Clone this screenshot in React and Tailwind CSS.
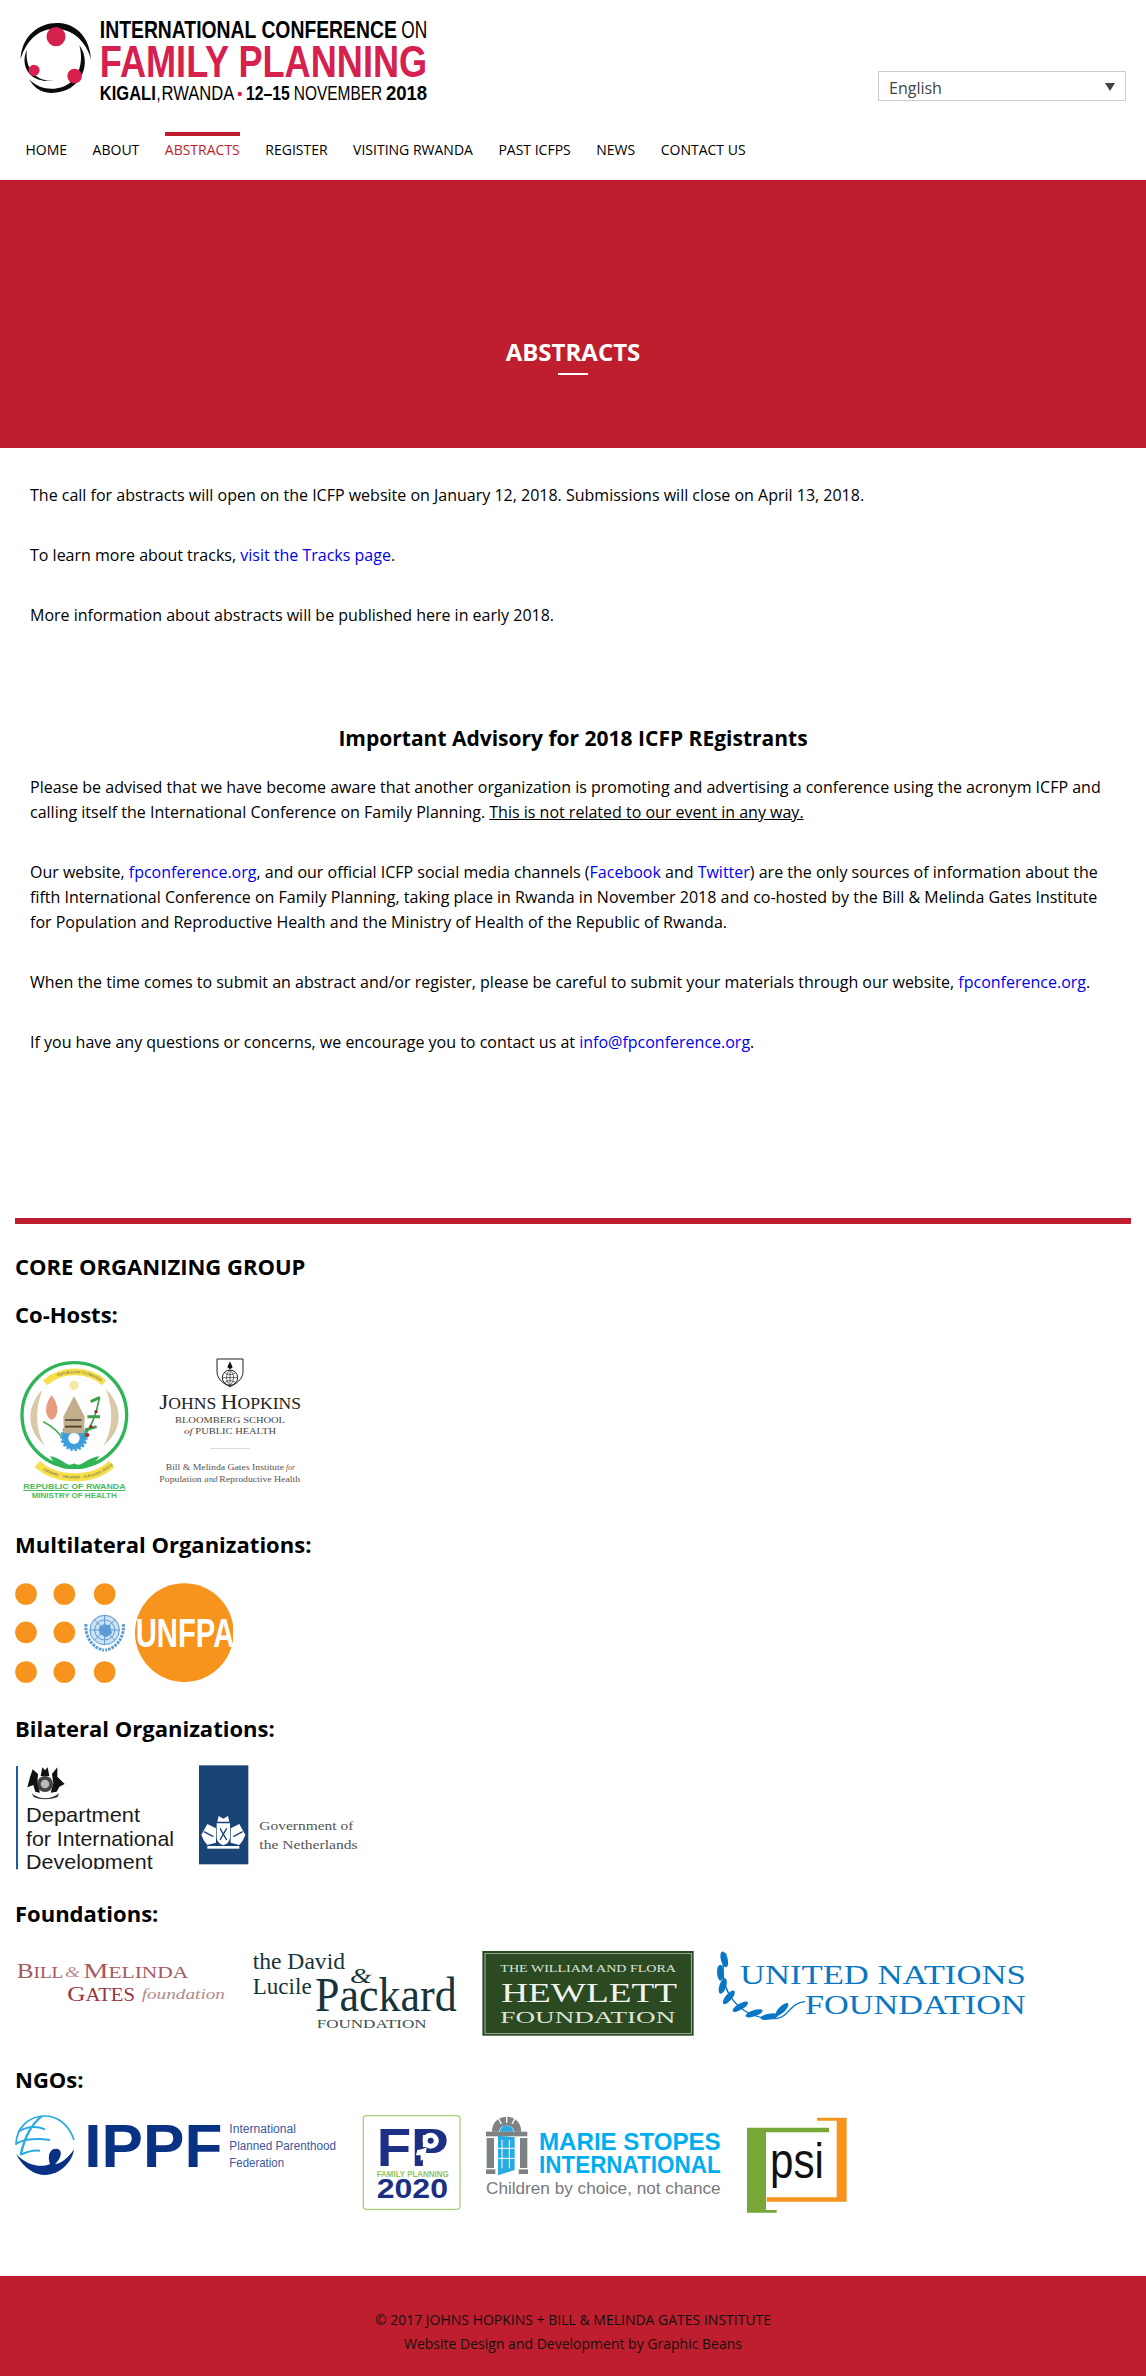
import React from "react";

const SANS = "'Liberation Sans', Arial, sans-serif";
const SERIF = "'Liberation Serif', 'Times New Roman', serif";

// svg text squeezed to the exact span read from the reference
function T({ x, x2, y, size, fill = "#000", bold, italic, font = SANS, children }) {
  return (
    <text
      x={x}
      y={y}
      fontSize={size}
      fill={fill}
      fontFamily={font}
      fontWeight={bold ? 700 : 400}
      fontStyle={italic ? "italic" : "normal"}
      textLength={x2 - x}
      lengthAdjust="spacingAndGlyphs"
    >
      {children}
    </text>
  );
}

function HeaderLogo() {
  return (
    <svg viewBox="48 60 1125 255" preserveAspectRatio="none" className="w-[411px] h-[85px] block">
      <path d="M55 178C58 105 108 66 160 69C208 72 244 112 248 178C236 128 200 86 150 86C104 86 70 122 55 178Z" fill="#0b0b0b" />
      <path d="M216 136C252 188 222 280 138 279C108 278 92 262 78 238C102 262 122 268 148 266C205 262 232 200 216 136Z" fill="#0b0b0b" />
      <path d="M72 150C52 200 82 252 146 242C112 246 66 222 72 150Z" fill="#0b0b0b" />
      <ellipse cx="152" cy="110" rx="26" ry="29" fill="#d6204e" />
      <ellipse cx="203" cy="228" rx="20" ry="22" fill="#d6204e" />
      <ellipse cx="92" cy="211" rx="15" ry="17" fill="#d6204e" />
      <T x={272} x2={1085} y={115} size={70} bold>INTERNATIONAL CONFERENCE</T>
      <T x={1097} x2={1168} y={115} size={70}>ON</T>
      <T x={272} x2={1168} y={232} size={132} fill="#d6204e" bold>FAMILY PLANNING</T>
      <T x={272} x2={425} y={300} size={62} bold>KIGALI</T>
      <T x={427} x2={438} y={300} size={62}>,</T>
      <T x={441} x2={640} y={300} size={62}>RWANDA</T>
      <ellipse cx="655" cy="282" rx="6" ry="7" fill="#d6204e" />
      <T x={672} x2={792} y={300} size={62} bold>12–15</T>
      <T x={803} x2={1045} y={300} size={62}>NOVEMBER</T>
      <T x={1055} x2={1168} y={300} size={62} bold>2018</T>
    </svg>
  );
}

function RwandaLogo() {
  return (
    <svg viewBox="45 465 360 441" className="w-[120px] h-[147px] block shrink-0">
      <circle cx="223" cy="645" r="157" fill="none" stroke="#2fb457" strokeWidth="10" />
      <path id="rw-top" d="M135 548C185 505 265 505 312 548" fill="none" stroke="#f5e04a" strokeWidth="20" />
      <path id="rw-bottom" d="M112 792C170 845 280 845 335 792" fill="none" stroke="#f5e04a" strokeWidth="24" />
      <text fontSize="11" fill="#555" fontFamily={SANS} dy="4">
        <textPath href="#rw-top" startOffset="22%">REPUBULIKA Y'U RWANDA</textPath>
      </text>
      <text fontSize="11" fill="#555" fontFamily={SANS} dy="4">
        <textPath href="#rw-bottom" startOffset="10%">UBUMWE · UMURIMO · GUKUNDA IGIHUGU</textPath>
      </text>
      <circle cx="222" cy="556" r="14" fill="#f6e9a6" />
      <path d="M128 568C78 620 78 690 135 738C105 690 105 625 128 568Z" fill="#d9c9a8" />
      <path d="M318 568C370 620 370 690 310 738C340 690 340 625 318 568Z" fill="#d9c9a8" />
      <path d="M155 585C180 620 175 650 155 660C135 650 130 620 155 585Z" fill="#e99b80" />
      <path d="M130 665C160 680 180 700 195 725" fill="none" stroke="#4cb050" strokeWidth="5" />
      <circle cx="222" cy="712" r="36" fill="#3f9ee0" stroke="#3f9ee0" strokeWidth="10" strokeDasharray="7 5" />
      <circle cx="222" cy="712" r="32" fill="#3f9ee0" />
      <circle cx="222" cy="715" r="17" fill="#fff" />
      <path d="M222 588L254 650L252 700L192 700L190 650Z" fill="#c2ad8c" />
      <path d="M195 660L245 660M195 680L245 680" stroke="#4b3c2a" strokeWidth="5" />
      <path d="M298 595C290 640 275 680 248 715" fill="none" stroke="#3e9e48" strokeWidth="5" />
      <path d="M272 605L300 592M262 650L300 650M255 690L290 680" stroke="#3e9e48" strokeWidth="9" />
      <circle cx="288" cy="635" r="5" fill="#b01c3c" /><circle cx="273" cy="680" r="5" fill="#b01c3c" /><circle cx="262" cy="705" r="6" fill="#b01c3c" />
      <path d="M150 768C190 775 200 805 222 790C245 805 255 775 298 768C280 800 250 812 222 805C195 812 165 800 150 768Z" fill="#2fb457" />
      <T x={70} x2={377} y={866} size={24} fill="#45bd62" bold>REPUBLIC OF RWANDA</T>
      <rect x="70" y="870" width="307" height="3" fill="#45bd62" />
      <T x={95} x2={350} y={895} size={21} fill="#45bd62" bold>MINISTRY OF HEALTH</T>
    </svg>
  );
}

function HopkinsLogo() {
  return (
    <svg viewBox="465 465 450 441" className="w-[150px] h-[147px] block shrink-0">
      <path d="M651 477H729V515C729 538 708 552 690 560C672 552 651 538 651 515Z" fill="#fff" stroke="#222" strokeWidth="3" />
      <path d="M690 484L698 502L690 508L682 502Z" fill="#111" />
      <circle cx="690" cy="533" r="23" fill="none" stroke="#222" strokeWidth="3" />
      <path d="M667 533H713M690 510V556M674 518C684 526 696 526 706 518M674 548C684 540 696 540 706 548M690 510C676 522 676 544 690 556M690 510C704 522 704 544 690 556" fill="none" stroke="#222" strokeWidth="2" />
      <T x={478} x2={903} y={628} size={50} fill="#222" font={SERIF}>
        <tspan fontSize="66">J</tspan>OHNS <tspan fontSize="66">H</tspan>OPKINS
      </T>
      <T x={525} x2={855} y={670} size={27} fill="#444" font={SERIF}>BLOOMBERG SCHOOL</T>
      <T x={552} x2={578} y={702} size={27} fill="#444" italic font={SERIF}>of</T>
      <T x={586} x2={828} y={702} size={27} fill="#444" font={SERIF}>PUBLIC HEALTH</T>
      <rect x="630" y="744" width="120" height="2" fill="#ccc" />
      <T x={497} x2={852} y={810} size={27} fill="#555" font={SERIF}>Bill &amp; Melinda Gates Institute</T>
      <T x={858} x2={885} y={810} size={27} fill="#555" italic font={SERIF}>for</T>
      <T x={478} x2={605} y={846} size={27} fill="#555" font={SERIF}>Population</T>
      <T x={613} x2={652} y={846} size={27} fill="#555" italic font={SERIF}>and</T>
      <T x={658} x2={900} y={846} size={27} fill="#555" font={SERIF}>Reproductive Health</T>
    </svg>
  );
}

function UnfpaLogo() {
  const dots = [[78, 222], [193, 222], [314, 222], [78, 337], [193, 337], [78, 456], [193, 456], [314, 456]];
  return (
    <svg viewBox="45 180 660 315" className="w-[220px] h-[105px] block">
      {dots.map(([x, y]) => (
        <circle key={x + "-" + y} cx={x} cy={y} r="32.5" fill="#f7941d" />
      ))}
      <circle cx="314" cy="330" r="46" fill="#cfe2f4" />
      <g fill="none" stroke="#5b9bd5" strokeWidth="3">
        <circle cx="314" cy="330" r="44" />
        <circle cx="314" cy="330" r="30" />
        <circle cx="314" cy="330" r="16" />
        <path d="M270 330H358M314 286V374M283 299L345 361M345 299L283 361" />
        <path d="M258 312C254 352 280 386 312 390M370 312C374 352 348 386 316 390" strokeWidth="9" strokeDasharray="8 3" />
      </g>
      <path d="M300 318L330 314L336 340L318 352L298 340Z" fill="#5b9bd5" />
      <circle cx="553" cy="338" r="148" fill="#f7941d" />
      <rect x="699" y="180" width="6" height="315" fill="#fff" />
      <T x={407} x2={703} y={381} size={122} fill="#fff" bold>UNFPA</T>
    </svg>
  );
}

function Crest() {
  return (
    <g>
      <circle cx="135" cy="792" r="24" fill="#444" />
      <circle cx="135" cy="792" r="13" fill="#bbb" />
      <path d="M122 768L127 742L135 751L143 742L148 768Z" fill="#111" />
      <path d="M98 748L114 762L112 790L120 818L106 815L100 795L82 802L90 772Z" fill="#111" />
      <path d="M172 742L172 770L194 792L178 800L170 815L152 818L160 790L156 762Z" fill="#111" />
      <path d="M95 820C120 840 150 840 178 820L172 832C150 840 120 840 102 832Z" fill="#333" />
    </g>
  );
}

function DfidLogo() {
  return (
    <svg viewBox="45 735 486 315" className="w-[162px] h-[105px] block shrink-0">
      <defs>
        <clipPath id="dfid-clip"><rect x="45" y="735" width="486" height="313" /></clipPath>
      </defs>
      <rect x="48" y="738" width="6" height="310" fill="#1d5fa0" />
      <Crest />
      <g clipPath="url(#dfid-clip)">
        <T x={78} x2={420} y={905} size={62} fill="#1a1a1a">Department</T>
        <T x={78} x2={522} y={977} size={62} fill="#1a1a1a">for International</T>
        <T x={78} x2={458} y={1048} size={62} fill="#1a1a1a">Development</T>
      </g>
    </svg>
  );
}

function NetherlandsLogo() {
  return (
    <svg viewBox="591 735 489 315" className="w-[163px] h-[105px] block shrink-0">
      <rect x="597" y="736" width="148" height="297" fill="#1a4476" />
      <g fill="#fff">
        <path d="M652 905L656 888L670 896L684 888L688 905Z" />
        <path d="M650 910H690V950C690 965 680 972 670 976C660 972 650 965 650 950Z" />
        <path d="M604 945L622 912L648 925L648 968L622 975L612 962Z" />
        <path d="M736 945L718 912L692 925L692 968L718 975L728 962Z" />
        <rect x="622" y="978" width="96" height="8" />
      </g>
      <path d="M660 925L680 960M680 925L660 960M612 935L640 950M728 935L700 950" stroke="#1a4476" strokeWidth="4" />
      <T x={778} x2={1060} y={930} size={38} fill="#555" font={SERIF}>Government of</T>
      <T x={778} x2={1073} y={988} size={38} fill="#555" font={SERIF}>the Netherlands</T>
    </svg>
  );
}

function GatesLogo() {
  return (
    <svg viewBox="45 60 636 300" className="w-[212px] h-[100px] block shrink-0">
      <T x={50} x2={190} y={175} size={50} fill="#a45a60" font={SERIF}>
        <tspan fontSize="66">B</tspan>ILL
      </T>
      <T x={195} x2={240} y={170} size={46} fill="#b98a8e" italic font={SERIF}>&amp;</T>
      <T x={250} x2={565} y={175} size={50} fill="#a45a60" font={SERIF}>
        <tspan fontSize="66">M</tspan>ELINDA
      </T>
      <T x={202} x2={405} y={243} size={54} fill="#96373f" font={SERIF}>
        <tspan fontSize="66">G</tspan>ATES
      </T>
      <T x={425} x2={675} y={238} size={44} fill="#b08a8d" italic font={SERIF}>foundation</T>
    </svg>
  );
}

function PackardLogo() {
  return (
    <svg viewBox="756 60 621 300" className="w-[207px] h-[100px] block shrink-0">
      <T x={758} x2={1035} y={148} size={70} fill="#17343a" font={SERIF}>the David</T>
      <T x={1050} x2={1115} y={188} size={66} fill="#17343a" italic font={SERIF}>&amp;</T>
      <T x={758} x2={935} y={222} size={70} fill="#17343a" font={SERIF}>Lucile</T>
      <T x={945} x2={1370} y={272} size={148} fill="#17343a" font={SERIF}>Packard</T>
      <T x={950} x2={1280} y={324} size={40} fill="#3c4f52" font={SERIF}>FOUNDATION</T>
    </svg>
  );
}

function HewlettLogo() {
  return (
    <svg viewBox="30 60 555 300" preserveAspectRatio="none" className="w-[212.4px] h-[100px] block shrink-0">
      <rect x="31" y="93" width="552" height="254" fill="#2b4a22" />
      <rect x="38" y="100" width="539" height="241" fill="none" stroke="#c4cfc0" strokeWidth="2" />
      <T x={78} x2={537} y={157} size={32} fill="#dde2da" font={SERIF}>THE WILLIAM AND FLORA</T>
      <T x={80} x2={540} y={245} size={80} fill="#f2f4f0" font={SERIF}>HEWLETT</T>
      <T x={78} x2={535} y={308} size={50} fill="#dde2da" font={SERIF}>FOUNDATION</T>
    </svg>
  );
}

function UnFoundationLogo() {
  const leaves = [[664, 118, 78], [654, 158, 88], [660, 198, 105], [676, 232, 125], [706, 260, 145], [742, 280, 158], [782, 290, 168], [815, 268, 130]];
  return (
    <svg viewBox="645 60 813 300" preserveAspectRatio="none" className="w-[311px] h-[100px] block shrink-0">
      <path d="M668 100C640 190 690 300 800 296C835 290 835 248 875 245" fill="none" stroke="#0a77c5" strokeWidth="4" />
      {leaves.map(([x, y, r]) => (
        <ellipse key={x} cx={x} cy={y} rx="24" ry="9" fill="#0a77c5" transform={"rotate(" + r + " " + x + " " + y + ")"} />
      ))}
      <T x={705} x2={1452} y={193} size={82} fill="#0a77c5" font={SERIF}>UNITED NATIONS</T>
      <T x={875} x2={1452} y={282} size={82} fill="#0a77c5" font={SERIF}>FOUNDATION</T>
    </svg>
  );
}

function IppfLogo() {
  return (
    <svg viewBox="45 69 966 300" className="w-[322px] h-[100px] block shrink-0">
      <g fill="none" stroke="#29abe2">
        <path d="M48 165C48 110 90 78 135 78C170 78 205 100 222 150" strokeWidth="5" />
        <path d="M125 78C95 105 75 135 62 195" strokeWidth="7" />
        <path d="M55 125C80 110 110 108 135 118M50 160C80 145 115 145 150 150M62 195C80 185 100 180 120 182" strokeWidth="6" />
      </g>
      <path d="M48 192C70 235 105 255 135 255C180 255 218 215 222 178C205 205 180 222 165 222C185 205 190 176 168 176C148 176 142 200 150 222C120 235 80 225 48 192Z" fill="#0a3284" />
      <T x={253} x2={667} y={232} size={184} fill="#0a3284" bold>IPPF</T>
      <T x={688} x2={888} y={130} size={36} fill="#3b58a0">International</T>
      <T x={688} x2={1008} y={180} size={36} fill="#3b58a0">Planned Parenthood</T>
      <T x={688} x2={852} y={230} size={36} fill="#3b58a0">Federation</T>
    </svg>
  );
}

function Fp2020Logo() {
  return (
    <svg viewBox="1086 69 300 300" className="w-[100px] h-[100px] block shrink-0">
      <rect x="1090" y="77" width="290" height="281" rx="10" fill="#fff" stroke="#a8cf7a" strokeWidth="4" />
      <T x={1130} x2={1346} y={228} size={160} fill="#1c2f82" bold>FP</T>
      <circle cx="1292" cy="152" r="24" fill="#fff" />
      <circle cx="1292" cy="152" r="9" fill="#1c2f82" />
      <path d="M1265 178L1280 172L1276 205L1262 212L1262 196L1248 196L1252 180Z" fill="#fff" />
      <T x={1130} x2={1346} y={262} size={28} fill="#94c25c" bold>FAMILY PLANNING</T>
      <T x={1130} x2={1344} y={325} size={82} fill="#1c2f82" bold>2020</T>
    </svg>
  );
}

function MarieStopesLogo() {
  return (
    <svg viewBox="42 69 714 300" className="w-[238px] h-[100px] block shrink-0">
      <path d="M66 125C66 65 154 65 154 125H132C132 100 88 100 88 125Z" fill="#7f8285" />
      <path d="M90 125C90 100 130 100 130 125Z" fill="#29abe2" />
      <path d="M85 85L94 102M110 76V98M135 85L126 102" stroke="#fff" strokeWidth="4" />
      <rect x="48" y="125" width="124" height="14" fill="#7f8285" />
      <rect x="50" y="144" width="22" height="90" fill="#7f8285" />
      <rect x="150" y="144" width="22" height="90" fill="#7f8285" />
      <rect x="48" y="238" width="28" height="14" fill="#7f8285" />
      <rect x="146" y="238" width="28" height="14" fill="#7f8285" />
      <path d="M84 137L134 142V240L84 256Z" fill="#29abe2" />
      <path d="M96 150V235M118 150V235M84 175H134M84 205H134" stroke="#fff" strokeWidth="3" />
      <T x={207} x2={752} y={180} size={74} fill="#00aeef" bold>MARIE STOPES</T>
      <T x={207} x2={752} y={250} size={74} fill="#00aeef" bold>INTERNATIONAL</T>
      <T x={48} x2={752} y={312} size={50} fill="#77797c">Children by choice, not chance</T>
    </svg>
  );
}

function PsiLogo() {
  return (
    <svg viewBox="828 69 306 300" className="w-[102px] h-[100px] block shrink-0">
      <path d="M831 113H1077V127H888V360H920V368H831Z" fill="#76a737" />
      <path d="M1041 83H1130V335H890V322H1100V92H1041Z" fill="#f7941d" />
      <T x={900} x2={1062} y={265} size={150} fill="#111">psi</T>
    </svg>
  );
}

function Section({ title, className, children }) {
  return (
    <div className={className}>
      <h3 className="text-[22px] leading-[30px] font-bold text-black">{title}</h3>
      {children}
    </div>
  );
}

const navItems = ["Home", "About", "Abstracts", "Register", "Visiting Rwanda", "Past ICFPs", "News", "Contact Us"];

function App() {
  return (
    <div className="font-['Open_Sans',sans-serif] text-black bg-white w-[1146px]">
      <header className="h-[180px] flex flex-col">
        <div className="flex items-start justify-between pl-[17.5px] pr-[20px] pt-[20px] h-[132px]">
          <HeaderLogo />
          <div className="relative mt-[51px]">
            <select className="appearance-none block w-[248px] h-[30px] border border-[#ccc] pl-[10px] pt-[3px] text-[16px] leading-[24px] text-[#444] bg-white rounded-none">
              <option>English</option>
            </select>
            <span className="absolute right-[11px] top-[12px] w-0 h-0 border-l-[5px] border-r-[5px] border-t-[8px] border-l-transparent border-r-transparent border-t-[#444]"></span>
          </div>
        </div>
        <nav className="flex gap-[25.5px] pl-[25.5px]">
          {navItems.map((item) => (
            <a
              key={item}
              className={
                item === "Abstracts"
                  ? "uppercase text-[14px] leading-[20px] pt-[4px] border-t-4 border-[#be1e2d] text-[#be1e2d]"
                  : "uppercase text-[14px] leading-[20px] pt-[4px] border-t-4 border-transparent text-black"
              }
            >
              {item}
            </a>
          ))}
        </nav>
      </header>

      <section className="h-[268px] bg-[#be1e2d] flex flex-col items-center pt-[157px]">
        <h1 className="text-[24px] leading-[30px] font-bold text-white uppercase">Abstracts</h1>
        <div className="w-[30px] h-[2px] bg-white mt-[6px]"></div>
      </section>

      <main className="px-[30px] pt-[35px] text-[16px] leading-[25px] h-[770px]">
        <p className="mb-[35px]">The call for abstracts will open on the ICFP website on January 12, 2018. Submissions will close on April 13, 2018.</p>
        <p className="mb-[35px]">To learn more about tracks, <a className="text-[#0000ee]">visit the Tracks page</a>.</p>
        <p>More information about abstracts will be published here in early 2018.</p>
        <h2 className="text-[21px] leading-[30px] font-bold text-center mt-[95px] mb-[22px]">Important Advisory for 2018 ICFP REgistrants</h2>
        <p className="mb-[35px]">
          Please be advised that we have become aware that another organization is promoting and advertising a conference using the acronym ICFP and calling itself the International Conference on Family Planning. <span className="underline">This is not related to our event in any way.</span>
        </p>
        <p className="mb-[35px]">
          Our website, <a className="text-[#0000ee]">fpconference.org</a>, and our official ICFP social media channels (<a className="text-[#0000ee]">Facebook</a> and <a className="text-[#0000ee]">Twitter</a>) are the only sources of information about the fifth International Conference on Family Planning, taking place in Rwanda in November 2018 and co-hosted by the Bill &amp; Melinda Gates Institute for Population and Reproductive Health and the Ministry of Health of the Republic of Rwanda.
        </p>
        <p className="mb-[35px]">When the time comes to submit an abstract and/or register, please be careful to submit your materials through our website, <a className="text-[#0000ee]">fpconference.org</a>.</p>
        <p>If you have any questions or concerns, we encourage you to contact us at <a className="text-[#0000ee]">info@fpconference.org</a>.</p>
      </main>

      <div className="mx-[15px] border-t-[6px] border-[#be1e2d] h-[1058px] pt-[27px]">
        <h2 className="text-[22px] leading-[30px] font-bold">CORE ORGANIZING GROUP</h2>
        <Section title="Co-Hosts:" className="mt-[18px]">
          <div className="flex gap-[20px] mt-[26px]">
            <RwandaLogo />
            <HopkinsLogo />
          </div>
        </Section>
        <Section title="Multilateral Organizations:" className="mt-[27px]">
          <div className="mt-[21px]"><UnfpaLogo /></div>
        </Section>
        <Section title="Bilateral Organizations:" className="mt-[28px]">
          <div className="flex gap-[20px] mt-[22px]">
            <DfidLogo />
            <NetherlandsLogo />
          </div>
        </Section>
        <Section title="Foundations:" className="mt-[28px]">
          <div className="flex mt-[12px]">
            <GatesLogo />
            <div className="ml-[25px]"><PackardLogo /></div>
            <div className="ml-[22.5px]"><HewlettLogo /></div>
            <div className="ml-[23px]"><UnFoundationLogo /></div>
          </div>
        </Section>
        <Section title="NGOs:" className="mt-[24px]">
          <div className="flex mt-[19px]">
            <IppfLogo />
            <div className="ml-[25px]"><Fp2020Logo /></div>
            <div className="ml-[22px]"><MarieStopesLogo /></div>
            <div className="ml-[24px]"><PsiLogo /></div>
          </div>
        </Section>
      </div>

      <footer className="h-[100px] bg-[#be1e2d] text-center text-[14px] leading-[24px] text-[#111] pt-[32px]">
        <p>© 2017 JOHNS HOPKINS + BILL &amp; MELINDA GATES INSTITUTE</p>
        <p>Website Design and Development by Graphic Beans</p>
      </footer>
    </div>
  );
}

export default App;
